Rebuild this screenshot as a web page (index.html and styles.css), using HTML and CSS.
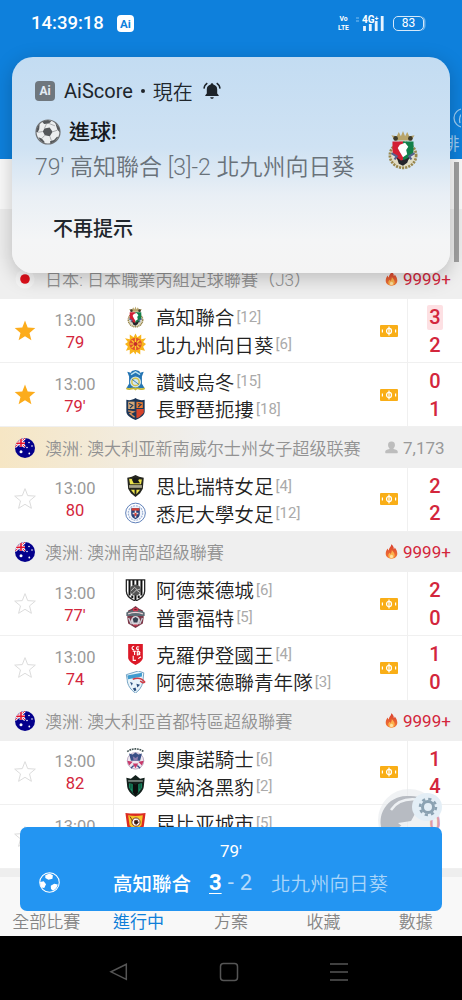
FILE: index.html
```html
<!DOCTYPE html>
<html lang="zh-Hant">
<head>
    <meta charset="UTF-8">
    <meta name="viewport" content="width=device-width, initial-scale=1.0">
    <title>AiScore</title>
    <link rel="stylesheet" href="styles.css">
</head>
<body>
    <!-- Icon sprites -->
    <svg class="sprites" width="0" height="0">
        <defs>
            <clipPath id="round"><circle cx="10" cy="10" r="10"/></clipPath>
            <linearGradient id="fire" x1="0" y1="0" x2="0" y2="1">
                <stop offset="0" stop-color="#d9402f"/>
                <stop offset="1" stop-color="#f47a35"/>
            </linearGradient>
        </defs>
        <symbol id="star" viewBox="0 0 22 22">
            <path d="M11 .6l2.700 7 7.600.5-5.800 4.800 1.900 7.400L11 16.300l-6.400 4 1.900-7.400L.7 8.100l7.600-.5z"/>
        </symbol>
        <symbol id="ticket" viewBox="0 0 18 12">
            <rect width="18" height="12" rx="1" fill="#f9ae17"/>
            <ellipse cx="9" cy="6" rx="2.500" ry="2.700" fill="none" stroke="#fff" stroke-width="1.200"/>
            <path d="M9 1.500v9M2.400 4.600v2.800M15.600 4.600v2.800" stroke="#fff" stroke-width="1.200"/>
        </symbol>
        <symbol id="flame" viewBox="0 0 12 15">
            <path d="M5.800.3c1.800 1.400 2.600 2.800 2.500 4.700.6-.4.9-1 1-1.600 1.400 1.800 2.500 3.800 2.500 6.100 0 3.300-2.500 5.200-5.800 5.200S.2 12.800.2 9.600c0-2.200 1-3.800 2-5 .2 1 .4 1.600.9 2C3.400 3.900 5.800 2.900 5.800.3z" fill="url(#fire)"/>
            <path d="M6.300 6c1.400 1.500 2.900 3.200 2.900 5.300 0 1.900-1.400 3.100-3.200 3.100s-3.200-1.200-3.200-3c0-1.200.6-2 1.200-2.700l.9 1.400C5.900 9 6.400 7.800 6.300 6z" fill="#fbb14c"/>
            <ellipse cx="6" cy="12.500" rx="1.600" ry="1.800" fill="#ffe0a0"/>
        </symbol>
        <symbol id="viewer" viewBox="0 0 14 14">
            <path d="M7 .6c2.700 0 3.900 1.700 3.700 3.900-.1 1.500-.7 2.700-1.500 3.400v.7c2.500.6 4.600 1.200 4.600 3.200 0 .9-.4 1.300-1.100 1.300H1.300c-.7 0-1.100-.4-1.100-1.300 0-2 2.100-2.600 4.600-3.200v-.7C4 7.200 3.400 6 3.300 4.500 3.100 2.300 4.300.6 7 .6z" fill="#bdbdbd"/>
        </symbol>
        <symbol id="flag-au" viewBox="0 0 20 20">
            <g clip-path="url(#round)">
                <rect width="20" height="20" fill="#04008c"/>
                <path d="M0 0l10 9M10 0L0 9" stroke="#fff" stroke-width="2.400"/>
                <path d="M0 0l10 9M10 0L0 9" stroke="#e4112b" stroke-width="1"/>
                <path d="M6 0v9M0 5.200h10" stroke="#fff" stroke-width="2.800"/>
                <path d="M6 0v9M0 5.200h10" stroke="#e4112b" stroke-width="1.600"/>
                <g fill="#fff">
                    <circle cx="6" cy="13.800" r="1.500"/>
                    <circle cx="14" cy="4.500" r=".8"/>
                    <circle cx="12" cy="9.500" r=".8"/>
                    <circle cx="17" cy="8" r=".8"/>
                    <circle cx="14.300" cy="15.500" r=".9"/>
                </g>
            </g>
        </symbol>
        <symbol id="flag-jp" viewBox="0 0 20 20">
            <circle cx="10" cy="10" r="9.500" fill="#f6f6f6"/>
            <circle cx="10" cy="10" r="4.800" fill="#e0101b"/>
        </symbol>
        <symbol id="ball" viewBox="0 0 26 26">
            <circle cx="13" cy="13" r="12" fill="#eceeef" stroke="#707274" stroke-width="1.200"/>
            <g fill="#55585b">
                <path d="M9.400 9.500l5.200-1 3 4.300-2.800 4.400-5-.9-2-3.800z"/>
                <path d="M7 2.600l6-1.600 3.300 1.400-2.600 2-4.600.6zM20.300 3.500l4 5.500.6 4.500-2.500-2.800-1.300-4zM1 12.500l1.800-5.600 1.800-1.600-.4 5-1.600 3.200zM3.400 18.300l3.400 1.200 2.700 3.300-.3 1.400-4-2.800zM15 22.300l4-1.300 3-3.300 1.200.4-3.200 4.500-4.600 2.100z"/>
            </g>
            <path d="M11.400 5l-2 4.500M17.600 12.800l4.800-1.600M14.800 17.200l1.700 4.700M9.800 16.300l-3 3.200M7.800 12.500l-4.700.8M13.700 4.400l6.200 2.400" stroke="#9a9da0" stroke-width=".8" fill="none"/>
        </symbol>

        <!-- Club crests -->
        <symbol id="kochi" viewBox="0 0 30 38">
            <path d="M7 10L4 5l5 1 2-4 2 4 2-5 2 5 2-4 2 4 5-1-3 5z" fill="#b8a46a"/>
            <circle cx="8" cy="8" r="2.200" fill="#3d3a2b"/><circle cx="22" cy="8" r="2.200" fill="#3d3a2b"/>
            <ellipse cx="15" cy="24" rx="12.500" ry="12" fill="#e0dcc4" stroke="#98864c" stroke-width="2.500" stroke-dasharray="2 1"/>
            <path d="M5 11h10v20c-6-2-10-7-10-12z" fill="#d21f33"/>
            <path d="M25 11H15v20c6-2 10-7 10-12z" fill="#12804a"/>
            <path d="M12 14l5-2 3 4-2 3 1 4-4 3-3-5-2-4z" fill="#fff"/>
            <path d="M4 22l5 3-2 3M26 22l-5 3 2 3" stroke="#55628c" stroke-width="2" fill="#dfe5ef"/>
            <path d="M9 26l4 3 4-1 4-2-2 5-4 3-4-2z" fill="#24242a"/>
        </symbol>
        <symbol id="kitakyushu" viewBox="0 0 22 22">
            <path d="M11 0l2 4 4-3v5l5-1-3 4 3 2-3 3 2 4-5-1v5l-4-3-1 3-2-3-4 3v-5l-4 1 2-4-3-3 3-2-3-4 5 1V1l4 3z" fill="#f8b51c"/>
            <circle cx="11" cy="11" r="6.500" fill="#e2532b"/>
            <path d="M11 5v12M5 11h12M7 7l8 8M15 7l-8 8" stroke="#fbd12c" stroke-width="1.300"/>
            <circle cx="11" cy="11" r="2" fill="#c32b2b"/>
        </symbol>
        <symbol id="sanuki" viewBox="0 0 22 24">
            <path d="M2 2l4 1 1-2 4-1 4 1 1 2 4-1-2 5v8l3 5H1l3-5V7z" fill="#2575b3"/>
            <path d="M6 5l5-3 5 3" stroke="#bce4f2" stroke-width="1.500" fill="none"/>
            <circle cx="11" cy="13" r="6" fill="#d4e8ee"/>
            <circle cx="11" cy="13" r="4" fill="none" stroke="#d6c34a" stroke-width="1.600"/>
            <path d="M7 10l8 6" stroke="#3479ae"/>
            <path d="M1 20c5 3 7-2 10 1 3-3 6 2 10-1" stroke="#c7b939" stroke-width="2" fill="none"/>
        </symbol>
        <symbol id="nagano" viewBox="0 0 22 24">
            <path d="M1 2c4 1 7 0 10-2 3 2 6 3 10 2v13c0 4-5 7-10 9C6 22 1 19 1 15z" fill="#1c3658"/>
            <path d="M3 4h7v8H3z" fill="#d5a878"/>
            <path d="M12 4l7 .5V11h-7z" fill="#e97b31"/>
            <path d="M12 12h8v4l-5 5-3 1z" fill="#d8442b"/>
            <path d="M3 14l6 1-4 2 5 4" stroke="#d98f58" stroke-width="1.500" fill="none"/>
            <path d="M4 6l4 2-3 3M14 6l3 1-3 3" stroke="#1c3658" stroke-width="1.300" fill="none"/>
        </symbol>
        <symbol id="spirit" viewBox="0 0 22 24">
            <path d="M2 3l5-1 4-2 4 2 5 1-1 12-3 5-5 4-5-4-3-5z" fill="#25261f"/>
            <path d="M4 4l14 1-1 5H5z" fill="#eae24b"/>
            <path d="M7 5l3-2 5 1-1 2 2 3H9z" fill="#191a18"/>
            <path d="M4 11h14v3H4z" fill="#a9a68b"/>
            <path d="M6 16l4 5V16zM12 16v5l4-5z" fill="#f0e84f"/>
        </symbol>
        <symbol id="sydney" viewBox="0 0 22 22">
            <circle cx="11" cy="11" r="10.300" fill="#fff" stroke="#587bb6" stroke-width="1"/>
            <circle cx="11" cy="11" r="7.600" fill="#eef3fb" stroke="#9db1d5" stroke-width="1.200" stroke-dasharray="2 1"/>
            <path d="M6.500 6h9v6c0 3-2 4-4.500 5.500C8.500 16 6.500 15 6.500 12z" fill="#2c437a"/>
            <path d="M7 6h8v2.500H7z" fill="#d63d31"/>
            <path d="M11 8.500V16M8 11.500h6" stroke="#e9d8d8" stroke-width="1.600"/>
            <path d="M10 11h2v3h-2z" fill="#d63d31"/>
        </symbol>
        <symbol id="adcity" viewBox="0 0 22 24">
            <path d="M1 1h20v12c0 5-5 9-10 11C6 22 1 18 1 13z" fill="#fff" stroke="#222" stroke-width="1.400"/>
            <path d="M4.500 1v17M8.700 1v6M13 1v6M17.500 1v17M11 17v6M7.500 18v3M14.500 18v3" stroke="#111" stroke-width="2.200"/>
            <circle cx="11" cy="12" r="6" fill="#555"/>
            <path d="M6 13l4-4 3 3 3-1M8 16l4-4 4 3" stroke="#ccc" fill="none"/>
        </symbol>
        <symbol id="prayford" viewBox="0 0 22 24">
            <path d="M3 5l4-2 4-3 4 3 4 2 1 7-1 7-8 5-8-5-1-7z" fill="#7c3848"/>
            <path d="M1 7c6-4 14-4 20 0v4H1z" fill="#5d6c75"/>
            <path d="M3 8.500c5-2 11-2 16 0" stroke="#ead3d7" stroke-width="1.500" fill="none"/>
            <circle cx="11" cy="16" r="5" fill="#d5d3da"/>
            <path d="M8 14l3-2 3 2-1 4H9z" fill="#35404f"/>
            <path d="M3.500 13l3 7M18.500 13l-3 7" stroke="#c9ccd4" stroke-width="1.500"/>
            <path d="M9 3h4v2H9zM9 21h4" stroke="#c93a51" stroke-width="1.500"/>
        </symbol>
        <symbol id="croydon" viewBox="0 0 22 24">
            <path d="M3 1h16v15c0 3-4 6-8 8-4-2-8-5-8-8z" fill="#dc1927"/>
            <path d="M9.500 3.500c-3 0-3 4 0 4M15 4.500c-3-2-4 3-1 3V6M8 9h4M10 9v4M13 9v4c4 0 3-2 1-2 3 0 2-2-1-2M8.500 14v5h3M14 17l3-2" stroke="#fff" stroke-width="1.200" fill="none"/>
        </symbol>
        <symbol id="united" viewBox="0 0 22 24">
            <path d="M1 4l13-4 6 2-1 10c-1 6-5 10-8 12C6 21 2 15 2 10z" fill="#e8f4fa" stroke="#6b9cc0" stroke-width="1"/>
            <path d="M2 5l16-3v4L3 9z" fill="#3f9bcf"/>
            <path d="M8 9c5-2 10-1 13 3-2 2-3 0-5-1" stroke="#d13b45" stroke-width="1.600" fill="none"/>
            <path d="M5 12l3 1-1 3zM12 14l4 1-3 3zM8 19l3-1 1 3-2 1z" fill="#294e7e"/>
        </symbol>
        <symbol id="oconnor" viewBox="0 0 22 24">
            <path d="M2 4c5-4 13-4 18 0" stroke="#455" stroke-width="1.800" stroke-dasharray="2 .8" fill="none"/>
            <circle cx="11" cy="14" r="9" fill="#eee8f1" stroke="#b9a6bf" stroke-width="1"/>
            <path d="M4 6l4 1 3-2 3 2 4-1-2 8H6z" fill="#3a4f86"/>
            <path d="M8 9l3 2 3-2-1 5H9z" fill="#8c7bab"/>
            <path d="M2 14l6 1-4 4zM20 14l-6 1 4 4zM8 17h6l-3 5z" fill="#c83869"/>
            <path d="M6 22l3-3M16 22l-3-3" stroke="#3a4f86" stroke-width="1.500"/>
        </symbol>
        <symbol id="monaro" viewBox="0 0 22 24">
            <path d="M1 3l5 1 5-4 5 4 5-1-1 10c-1 5-5 8-9 11-4-3-8-6-9-11z" fill="#14211d"/>
            <path d="M3 5.500h16v2H3z" fill="#718079"/>
            <path d="M4 9v5l5 7V10zM18 9v5l-5 7V10z" fill="#168c64"/>
            <path d="M8 9l3 2 3-2v10l-3 3-3-3z" fill="#0b0e0d"/>
            <path d="M6 10v5M16 10v5" stroke="#0e3a2a"/>
        </symbol>
        <symbol id="cooma" viewBox="0 0 22 24">
            <path d="M0 1c7 1 15 1 22 0l-2 15-9 8-9-8z" fill="#dc2b22"/>
            <path d="M3 3.500c5 1 11 1 16 0l-1.500 11-6.500 6-6.500-6z" fill="#f5c62b"/>
            <circle cx="11.500" cy="11" r="4.500" fill="#fff" stroke="#722b1d"/>
            <path d="M10 9.500l3-.5 1 2.500-2 2-2-1zM5 5l3 5" stroke="#722b1d" fill="#222"/>
        </symbol>
    </svg>

    <div class="phone">
        <header class="app-header">
            <div class="status-bar">
                <span class="clock">14:39:18</span>
                <span class="ai-badge">Ai</span>
                <div class="status-right">
                    <span class="volte"><span>Vo</span><span>LTE</span></span>
                    <svg class="signal" width="29" height="17" viewBox="0 0 29 17">
                        <path d="M0 3h3M0 6h3" stroke="#5aabea" stroke-width="1.300"/>
                        <path d="M8.500 16v-5M14.300 16V9M20.200 16V6M26.200 16V1" stroke="#e8f4ff" stroke-width="2.800"/>
                        <text x="6" y="8" class="net">4G⁺</text>
                    </svg>
                    <span class="battery">83</span>
                </div>
            </div>
            <div class="sport-tab">
                <svg width="20" height="20" viewBox="0 0 20 20" fill="none" stroke="#9ccbf1" stroke-width="1.300">
                    <circle cx="22" cy="10" r="9"/>
                    <path d="M19 15c-1-4 0-8 3-10"/>
                </svg>
                <span>排</span>
            </div>
        </header>

        <div class="date-bar"></div>
        <div class="filter-bar"></div>

        <main class="list">
            <div class="league">
                <svg class="flag"><use href="#flag-jp"/></svg>
                <span class="league-name">日本: 日本職業丙組足球聯賽（J3）</span>
                <span class="heat"><svg><use href="#flame"/></svg>9999+</span>
            </div>
            <div class="match">
                <svg class="star on"><use href="#star"/></svg>
                <div class="time"><span>13:00</span><span class="live">79</span></div>
                <div class="teams">
                    <div class="team"><svg><use href="#kochi"/></svg>高知聯合<small>[12]</small></div>
                    <div class="team"><svg><use href="#kitakyushu"/></svg>北九州向日葵<small>[6]</small></div>
                </div>
                <svg class="ticket"><use href="#ticket"/></svg>
                <div class="score"><span><b class="goal">3</b></span><span>2</span></div>
            </div>
            <div class="match">
                <svg class="star on"><use href="#star"/></svg>
                <div class="time"><span>13:00</span><span class="live">79'</span></div>
                <div class="teams">
                    <div class="team"><svg><use href="#sanuki"/></svg>讚岐烏冬<small>[15]</small></div>
                    <div class="team"><svg><use href="#nagano"/></svg>長野琶扼摟<small>[18]</small></div>
                </div>
                <svg class="ticket"><use href="#ticket"/></svg>
                <div class="score"><span>0</span><span>1</span></div>
            </div>

            <div class="league top">
                <svg class="flag"><use href="#flag-au"/></svg>
                <span class="league-name">澳洲: 澳大利亚新南威尔士州女子超级联赛</span>
                <span class="heat normal"><svg><use href="#viewer"/></svg>7,173</span>
            </div>
            <div class="match">
                <svg class="star"><use href="#star"/></svg>
                <div class="time"><span>13:00</span><span class="live">80</span></div>
                <div class="teams">
                    <div class="team"><svg><use href="#spirit"/></svg>思比瑞特女足<small>[4]</small></div>
                    <div class="team"><svg><use href="#sydney"/></svg>悉尼大學女足<small>[12]</small></div>
                </div>
                <svg class="ticket"><use href="#ticket"/></svg>
                <div class="score"><span>2</span><span>2</span></div>
            </div>

            <div class="league">
                <svg class="flag"><use href="#flag-au"/></svg>
                <span class="league-name">澳洲: 澳洲南部超級聯賽</span>
                <span class="heat"><svg><use href="#flame"/></svg>9999+</span>
            </div>
            <div class="match">
                <svg class="star"><use href="#star"/></svg>
                <div class="time"><span>13:00</span><span class="live">77'</span></div>
                <div class="teams">
                    <div class="team"><svg><use href="#adcity"/></svg>阿德萊德城<small>[6]</small></div>
                    <div class="team"><svg><use href="#prayford"/></svg>普雷福特<small>[5]</small></div>
                </div>
                <svg class="ticket"><use href="#ticket"/></svg>
                <div class="score"><span>2</span><span>0</span></div>
            </div>
            <div class="match">
                <svg class="star"><use href="#star"/></svg>
                <div class="time"><span>13:00</span><span class="live">74</span></div>
                <div class="teams">
                    <div class="team"><svg><use href="#croydon"/></svg>克羅伊登國王<small>[4]</small></div>
                    <div class="team"><svg><use href="#united"/></svg>阿德萊德聯青年隊<small>[3]</small></div>
                </div>
                <svg class="ticket"><use href="#ticket"/></svg>
                <div class="score"><span>1</span><span>0</span></div>
            </div>

            <div class="league">
                <svg class="flag"><use href="#flag-au"/></svg>
                <span class="league-name">澳洲: 澳大利亞首都特區超級聯賽</span>
                <span class="heat"><svg><use href="#flame"/></svg>9999+</span>
            </div>
            <div class="match">
                <svg class="star"><use href="#star"/></svg>
                <div class="time"><span>13:00</span><span class="live">82</span></div>
                <div class="teams">
                    <div class="team"><svg><use href="#oconnor"/></svg>奧康諾騎士<small>[6]</small></div>
                    <div class="team"><svg><use href="#monaro"/></svg>莫納洛黑豹<small>[2]</small></div>
                </div>
                <svg class="ticket"><use href="#ticket"/></svg>
                <div class="score"><span>1</span><span>4</span></div>
            </div>
            <div class="match">
                <svg class="star"><use href="#star"/></svg>
                <div class="time"><span>13:00</span><span class="live"></span></div>
                <div class="teams">
                    <div class="team"><svg><use href="#cooma"/></svg>昆比亚城市<small>[5]</small></div>
                    <div class="team"></div>
                </div>
                <div class="score"><span>0</span><span></span></div>
            </div>
        </main>

        <nav class="tabs">
            <span>全部比賽</span>
            <span class="active">進行中</span>
            <span>方案</span>
            <span>收藏</span>
            <span>數據</span>
        </nav>

        <div class="sysnav">
            <svg width="20" height="20" viewBox="0 0 20 20"><path d="M17.300 2.300v15L2 9.800z"/></svg>
            <svg width="20" height="20" viewBox="0 0 20 20"><rect x="1.500" y="1.500" width="17" height="17" rx="3"/></svg>
            <svg width="20" height="20" viewBox="0 0 20 20"><path d="M1 2h18M1 10h18M1 18h18"/></svg>
        </div>

        <div class="scrollbar"></div>

        <!-- Floating ball button, see-through over the score column -->
        <svg class="assist" viewBox="0 0 64 60">
            <circle cx="31" cy="31" r="31" fill="#e6e9ed" fill-opacity=".6"/>
            <path d="M31 7a26 26 0 1 0 14 46l-3-9-10 1-8 5 5-9-9-7 13-2 5-9c-4-6-3-11 2-15A26 26 0 0 0 31 7z" fill="#b7bbc2"/>
            <path d="M13 21C19 12 30 9 42 11M19 41l9-6M22 45l9-6" stroke="#eef1f4" stroke-width="2.500" fill="none"/>
            <ellipse cx="49" cy="18" rx="15" ry="14" fill="#e3eef6"/>
            <circle cx="50" cy="18" r="5.500" fill="none" stroke="#8ba2b2" stroke-width="3"/>
            <circle cx="50" cy="18" r="8" fill="none" stroke="#8ba2b2" stroke-width="2.500" stroke-dasharray="3.200 3.080"/>
        </svg>

        <section class="notice">
            <div class="notice-head">
                <span class="ai-badge grey">Ai</span>
                <span>AiScore</span><i class="dot"></i><span class="when">現在</span>
                <svg width="18" height="18" viewBox="0 0 18 18">
                    <path d="M9 1.300c.9 0 1.300.6 1.300 1.300 2.500.6 3.900 2.400 3.900 4.800v4.200l1.500 1.600v.9H2.300v-.9l1.500-1.600V7.400c0-2.400 1.400-4.200 3.900-4.800 0-.7.4-1.300 1.300-1.300zM7.200 15.200h3.600c-.2 1-.9 1.600-1.800 1.600s-1.600-.6-1.800-1.600z" fill="#1d2329"/>
                    <path d="M4.300 1.200C2.300 2.500 1.200 4.300 1 6.600M13.700 1.200c2 1.300 3.100 3.100 3.300 5.400" stroke="#1d2329" stroke-width="1.500" fill="none"/>
                </svg>
            </div>
            <div class="notice-body">
                <div class="notice-text">
                    <h2><svg width="26" height="26"><use href="#ball"/></svg>進球!</h2>
                    <p>79' 高知聯合 [3]-2 北九州向日葵</p>
                </div>
                <svg class="notice-crest"><use href="#kochi"/></svg>
            </div>
            <a class="notice-action">不再提示</a>
        </section>

        <section class="live-bar">
            <div class="live-minute">79'</div>
            <div class="live-row">
                <svg class="live-ball" viewBox="0 0 20 20">
                    <circle cx="10" cy="10" r="9.300" fill="#2395f2" stroke="#fff" stroke-width="1"/>
                    <path d="M6 3l4-1.600 3.200 1.800-.4 3.200-3.800.9L6 5.600zM1 9.500l3.500-.8 2.200 3-1.700 3.500-2.600-.4A9 9 0 0 1 1 9.500zM11.200 13l3.300-1.900 3.400.9c-.5 2.600-2.200 4.700-4.500 5.900l-2-1.700z" fill="#fff"/>
                </svg>
                <span class="home">高知聯合</span>
                <span class="result"><b>3</b><i>-</i><em>2</em></span>
                <span class="away">北九州向日葵</span>
            </div>
        </section>
    </div>
</body>
</html>
```

FILE: styles.css
```css
* {
    box-sizing: border-box;
}

body {
    margin: 0;
    font-family: Roboto, 'Noto Sans CJK TC', sans-serif;
    background: #fff;
    color: #222;
}

.sprites {
    position: absolute;
}

.phone {
    position: relative;
    width: 462px;
    height: 1000px;
    overflow: hidden;
    display: flex;
    flex-direction: column;
}

/* Header */
.app-header {
    height: 159px;
    flex: none;
    background: #0e80dc;
    color: #fff;
    display: flex;
    flex-direction: column;
    justify-content: space-between;
}

.status-bar {
    display: flex;
    align-items: center;
    height: 46px;
    padding: 0 38px 0 31px;
}

.clock {
    font-size: 18.500px;
    font-weight: 500;
    width: 86px;
}

.ai-badge {
    width: 17px;
    height: 17px;
    border-radius: 4px;
    background: #fff;
    color: #0e80dc;
    font-size: 11.500px;
    font-weight: 700;
    line-height: 18px;
    text-align: center;
}

.ai-badge.grey {
    width: 20px;
    height: 20px;
    line-height: 20px;
    background: #6f777e;
    color: #e4edf5;
    font-size: 12px;
}

.status-right {
    margin-left: auto;
    display: flex;
    align-items: center;
}

.volte {
    display: flex;
    flex-direction: column;
    font-size: 8px;
    font-weight: 700;
    line-height: 9.500px;
    text-align: center;
    margin-right: 6px;
    transform: scaleX(0.85);
}

.signal {
    margin-right: 8px;
}

.net {
    font-size: 10px;
    font-weight: 700;
    fill: #fff;
    stroke: #0e80dc;
    stroke-width: 1.500px;
    paint-order: stroke;
}

.battery {
    width: 31px;
    height: 15px;
    border: 1.500px solid #d5e9fa;
    border-radius: 5px;
    font-size: 12px;
    line-height: 13px;
    text-align: center;
    box-shadow: 2px 0 0 -0.500px #6db2ea;
}

.sport-tab {
    align-self: flex-end;
    display: flex;
    flex-direction: column;
    align-items: center;
    gap: 6px;
    padding: 0 1px 5px 0;
    font-size: 17px;
    line-height: 20px;
    color: #9ccbf1;
}

.date-bar {
    flex: none;
    height: 50px;
    background: #fafafa;
}

.filter-bar {
    flex: none;
    height: 49.700px;
    background: #eee;
}

/* Match list */
.list {
    flex: none;
    height: 610.600px;
}

.league {
    display: flex;
    align-items: center;
    height: 40.300px;
    padding-left: 15px;
    background: #efefef;
    color: #999;
    font-size: 17px;
}

.league.top {
    background: linear-gradient(90deg, #f6e6c4 0, #efefef 45%);
}

.flag {
    width: 20px;
    height: 20px;
    margin-right: 10px;
}

.league-name {
    font-size: 17.120px;
    font-weight: 350;
    white-space: nowrap;
    color: #929292;
}

.heat {
    display: flex;
    align-items: center;
    margin-left: auto;
    width: 77px;
    color: #d3263c;
}

.heat svg {
    width: 13px;
    height: 15px;
    margin-right: 5px;
}

.heat.normal {
    color: #999;
}

.match {
    display: flex;
    align-items: center;
    height: 64.200px;
    background: #fff;
    border-bottom: 1px solid #f0f0f0;
}

.star {
    width: 22px;
    height: 22px;
    margin: 0 14px;
    fill: #fff;
    stroke: #dcdcdc;
}

.star.on {
    fill: #fcac1c;
    stroke: none;
}

.time {
    width: 50px;
    margin-right: 13px;
    padding-top: 2px;
    display: flex;
    flex-direction: column;
    align-items: center;
    font-size: 16.500px;
    line-height: 22px;
    color: #999;
}

.live {
    height: 22px;
    color: #d3263c;
}

.teams {
    align-self: stretch;
    flex: 1;
    display: flex;
    flex-direction: column;
    justify-content: center;
    border-left: 1px solid #f0f0f0;
    padding-left: 11px;
}

.team {
    display: flex;
    align-items: center;
    height: 27.500px;
    font-size: 19.600px;
    font-weight: 350;
    white-space: nowrap;
}

.team svg {
    width: 21px;
    height: 22px;
    margin-right: 10px;
}

.team small {
    font-size: 15px;
    font-weight: 400;
    color: #aaa;
    margin-left: 2px;
}

.ticket {
    width: 18px;
    height: 12px;
    margin-right: 9px;
}

.score {
    align-self: stretch;
    width: 55px;
    padding-top: 2px;
    border-left: 1px solid #f0f0f0;
    display: flex;
    flex-direction: column;
    justify-content: center;
    align-items: center;
    font-size: 20px;
    font-weight: 500;
    line-height: 27.500px;
    color: #d3263c;
}

.score span {
    height: 27.500px;
}

.goal {
    display: block;
    width: 16px;
    height: 25px;
    margin-top: 1px;
    line-height: 25px;
    text-align: center;
    font-weight: 500;
    background: #fde0e3;
    border-radius: 2px;
}

/* Bottom bars */
.tabs {
    flex: none;
    height: 66.700px;
    display: flex;
    align-items: flex-end;
    padding-bottom: 2px;
    background: #f8f8f8;
    border-top: 8px solid #eee;
    font-size: 17px;
    font-weight: 350;
    line-height: 24px;
    color: #858585;
}

.tabs span {
    flex: 1;
    text-align: center;
}

.tabs .active {
    color: #0f7fd8;
    font-weight: 400;
}

.sysnav {
    flex: 1;
    display: flex;
    justify-content: center;
    gap: 90px;
    padding: 26px 5px 0 0;
    background: #000;
    fill: none;
    stroke: #555;
    stroke-width: 1.500;
}

.scrollbar {
    position: absolute;
    top: 162px;
    left: 454px;
    width: 5px;
    height: 100px;
    background: #a0a0a0;
}

.assist {
    position: absolute;
    top: 789px;
    left: 378px;
    width: 64px;
    height: 60px;
}

/* Push notification */
.notice {
    position: absolute;
    top: 57px;
    left: 12px;
    width: 438px;
    height: 216px;
    padding: 22px 31px 0 23px;
    border-radius: 21px;
    background: linear-gradient(180deg, #c3dcf2 0, #cfe2f3 42%, #e9eff5 64%, #f4f5f6 85%, #f4f4f4 100%);
    box-shadow: 0 5px 20px rgba(0, 0, 0, 0.22);
}

.notice-head {
    display: flex;
    align-items: center;
    height: 24px;
    font-size: 20px;
    font-weight: 400;
    color: #20262c;
}

.notice-head .ai-badge {
    margin-right: 9px;
}

.notice-head .when {
    font-weight: 350;
}

.dot {
    width: 4px;
    height: 4px;
    margin: 0 8px;
    border-radius: 50%;
    background: #20262c;
}

.notice-head svg {
    margin-left: 10px;
}

.notice-body {
    display: flex;
    align-items: center;
    justify-content: space-between;
    padding-top: 12px;
}

.notice-text h2 {
    display: flex;
    align-items: center;
    gap: 8px;
    margin: 0;
    font-size: 21px;
    font-weight: 500;
    line-height: 34px;
    color: #15191d;
}

.notice-text p {
    margin: 0;
    padding-top: 1px;
    font-size: 23px;
    font-weight: 350;
    line-height: 35px;
    white-space: nowrap;
    color: #69727a;
}

.notice-crest {
    width: 32px;
    height: 40px;
}

.notice-action {
    display: block;
    margin: 29px 0 0 18px;
    font-size: 20px;
    font-weight: 500;
    line-height: 30px;
    color: #20262c;
}

/* Floating live score */
.live-bar {
    position: absolute;
    top: 827px;
    left: 20px;
    width: 422px;
    height: 84px;
    padding-top: 12px;
    border-radius: 7px;
    background: #2395f2;
    color: #fff;
}

.live-minute {
    font-size: 17px;
    line-height: 24px;
    text-align: center;
}

.live-row {
    display: flex;
    align-items: center;
    height: 39px;
    font-size: 19.500px;
}

.live-ball {
    width: 21px;
    height: 21px;
    margin: 0 53px 0 19px;
}

.home {
    width: 96px;
    font-weight: 500;
}

.result {
    display: flex;
    align-items: center;
    width: 62px;
    font-size: 22px;
}

.result b {
    text-decoration: underline;
    text-decoration-thickness: 1px;
    text-underline-offset: 3px;
}

.result i,
.result em {
    font-style: normal;
    margin-left: 6px;
    color: #b4dafb;
}

.away {
    font-weight: 350;
    color: #a9d5fa;
}
```
